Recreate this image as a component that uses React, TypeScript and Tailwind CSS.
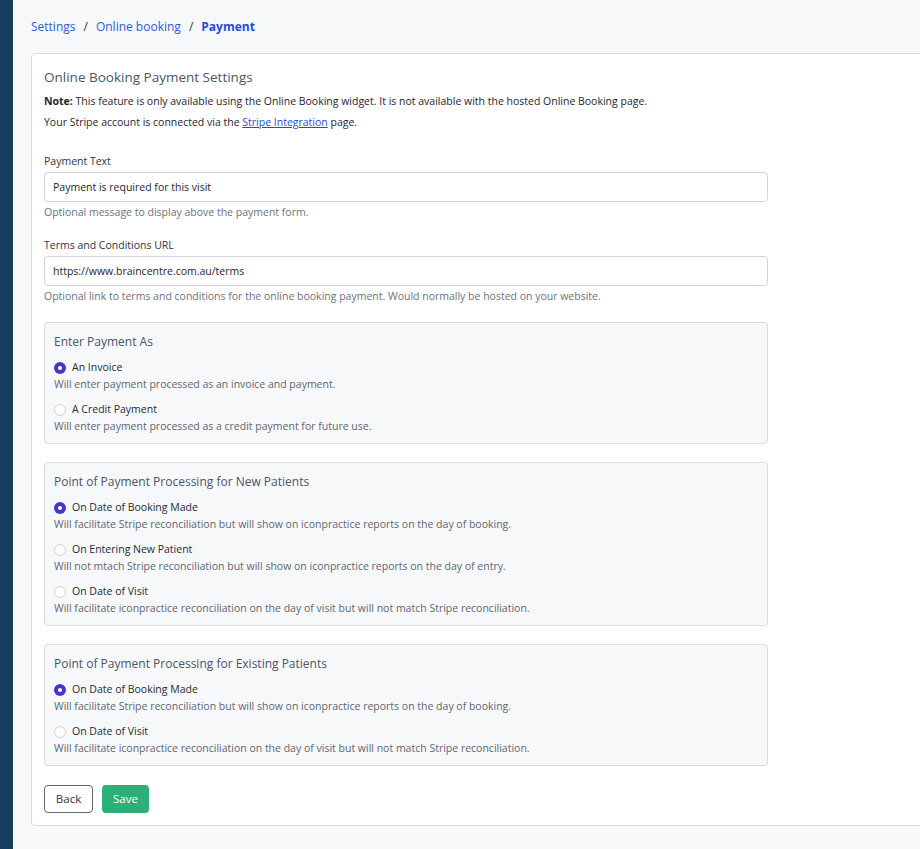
import { useState } from 'react'

// Online booking → Payment settings page.

type Option = { value: string; label: string; hint: string }

const enterAs: Option[] = [
    { value: 'invoice', label: 'An Invoice', hint: 'Will enter payment processed as an invoice and payment.' },
    { value: 'credit', label: 'A Credit Payment', hint: 'Will enter payment processed as a credit payment for future use.' },
]

const newPatients: Option[] = [
    {
        value: 'booking',
        label: 'On Date of Booking Made',
        hint: 'Will facilitate Stripe reconciliation but will show on iconpractice reports on the day of booking.',
    },
    {
        value: 'entering',
        label: 'On Entering New Patient',
        hint: 'Will not mtach Stripe reconciliation but will show on iconpractice reports on the day of entry.',
    },
    {
        value: 'visit',
        label: 'On Date of Visit',
        hint: 'Will facilitate iconpractice reconciliation on the day of visit but will not match Stripe reconciliation.',
    },
]

const existingPatients: Option[] = [newPatients[0], newPatients[2]]

function RadioGroup({
    title,
    name,
    options,
    value,
    onChange,
}: {
    title: string
    name: string
    options: Option[]
    value: string
    onChange: (v: string) => void
}) {
    return (
        <fieldset className="rounded-[4px] border border-[#d9dce1] bg-[#f7f8fa] px-[9px] pt-[10px] pb-[8px]">
            <legend className="float-left w-full text-[12px] leading-[18px] text-[#4a5568]">{title}</legend>
            <div className="clear-both flex flex-col gap-[8px] pt-[8px]">
                {options.map(o => {
                    const checked = o.value === value
                    return (
                        <label key={o.value} className="block cursor-pointer">
                            <span className="flex items-center gap-[6px] text-[10.5px] leading-[17px] text-[#252a35]">
                                <input
                                    type="radio"
                                    name={name}
                                    checked={checked}
                                    onChange={() => onChange(o.value)}
                                    className="sr-only"
                                />
                                <span
                                    className={`grid h-[12px] w-[12px] place-items-center rounded-full ${
                                        checked ? 'bg-[#4338ca]' : 'border border-[#cfd3d9] bg-white'
                                    }`}
                                >
                                    {checked && <span className="h-[4px] w-[4px] rounded-full bg-white" />}
                                </span>
                                {o.label}
                            </span>
                            <span className="block text-[10.5px] leading-[17px] text-[#5f6672]">{o.hint}</span>
                        </label>
                    )
                })}
            </div>
        </fieldset>
    )
}

export default function App() {
    const [paymentText, setPaymentText] = useState('Payment is required for this visit')
    const [termsUrl, setTermsUrl] = useState('https://www.braincentre.com.au/terms')
    const [entry, setEntry] = useState('invoice')
    const [newPoint, setNewPoint] = useState('booking')
    const [existingPoint, setExistingPoint] = useState('booking')

    return (
        <div className="flex min-h-[849px] bg-[#f7f8fa] font-['Open_Sans',sans-serif]">
            <aside className="w-[13px] shrink-0 bg-[#163f5e]" />
            <main className="min-w-0 flex-1 overflow-hidden pt-[17px] pl-[18px]">
                <nav className="flex items-center gap-[8px] text-[12px] leading-[20px]">
                    <a href="#" className="text-[#2a5bd7]">Settings</a>
                    <span className="text-[#2d3340]">/</span>
                    <a href="#" className="text-[#2a5bd7]">Online booking</a>
                    <span className="text-[#2d3340]">/</span>
                    <span className="font-bold text-[#1d4ed8]">Payment</span>
                </nav>

                <section className="mt-[16px] -mr-[10px] rounded-[4px] border border-[#d9dce1] bg-white px-[12px] pt-[13px] pb-[12px]">
                    <h1 className="text-[13.5px] leading-[20px] text-[#4a5568]">Online Booking Payment Settings</h1>
                    <p className="mt-[4px] text-[10.5px] leading-[21px] text-[#1f2430]">
                        <strong className="font-bold">Note:</strong> This feature is only available using the Online
                        Booking widget. It is not available with the hosted Online Booking page.
                    </p>
                    <p className="text-[10.5px] leading-[21px] text-[#1f2430]">
                        Your Stripe account is connected via the{' '}
                        <a href="#" className="text-[#1d4ed8] underline">
                            Stripe Integration
                        </a>{' '}
                        page.
                    </p>

                    <div className="w-[724px]">
                        <label className="mt-[19px] block text-[10.5px] leading-[18px] text-[#2d3340]">
                            Payment Text
                            <input
                                value={paymentText}
                                onChange={e => setPaymentText(e.target.value)}
                                className="mt-[2px] block h-[30px] w-full rounded-[4px] border border-[#d0d4da] bg-white px-[8px] text-[10.5px] text-[#1f2430] outline-none"
                            />
                        </label>
                        <p className="mt-[1px] text-[10.5px] leading-[18px] text-[#6b7280]">
                            Optional message to display above the payment form.
                        </p>

                        <label className="mt-[15px] block text-[10.5px] leading-[18px] text-[#2d3340]">
                            Terms and Conditions URL
                            <input
                                value={termsUrl}
                                onChange={e => setTermsUrl(e.target.value)}
                                className="mt-[2px] block h-[30px] w-full rounded-[4px] border border-[#d0d4da] bg-white px-[8px] text-[10.5px] text-[#1f2430] outline-none"
                            />
                        </label>
                        <p className="mt-[1px] text-[10.5px] leading-[18px] text-[#6b7280]">
                            Optional link to terms and conditions for the online booking payment. Would normally be
                            hosted on your website.
                        </p>

                        <div className="mt-[17px] flex flex-col gap-[18px]">
                            <RadioGroup
                                title="Enter Payment As"
                                name="entry"
                                options={enterAs}
                                value={entry}
                                onChange={setEntry}
                            />
                            <RadioGroup
                                title="Point of Payment Processing for New Patients"
                                name="new"
                                options={newPatients}
                                value={newPoint}
                                onChange={setNewPoint}
                            />
                            <RadioGroup
                                title="Point of Payment Processing for Existing Patients"
                                name="existing"
                                options={existingPatients}
                                value={existingPoint}
                                onChange={setExistingPoint}
                            />
                        </div>

                        <div className="mt-[19px] flex gap-[9px]">
                            <button
                                type="button"
                                className="h-[28px] w-[49px] rounded-[4px] border border-[#5f6672] bg-white text-[11.5px] text-[#2d3340]"
                            >
                                Back
                            </button>
                            <button
                                type="button"
                                className="h-[28px] w-[47px] rounded-[4px] bg-[#2bb07a] text-[11.5px] text-white"
                            >
                                Save
                            </button>
                        </div>
                    </div>
                </section>
            </main>
        </div>
    )
}
